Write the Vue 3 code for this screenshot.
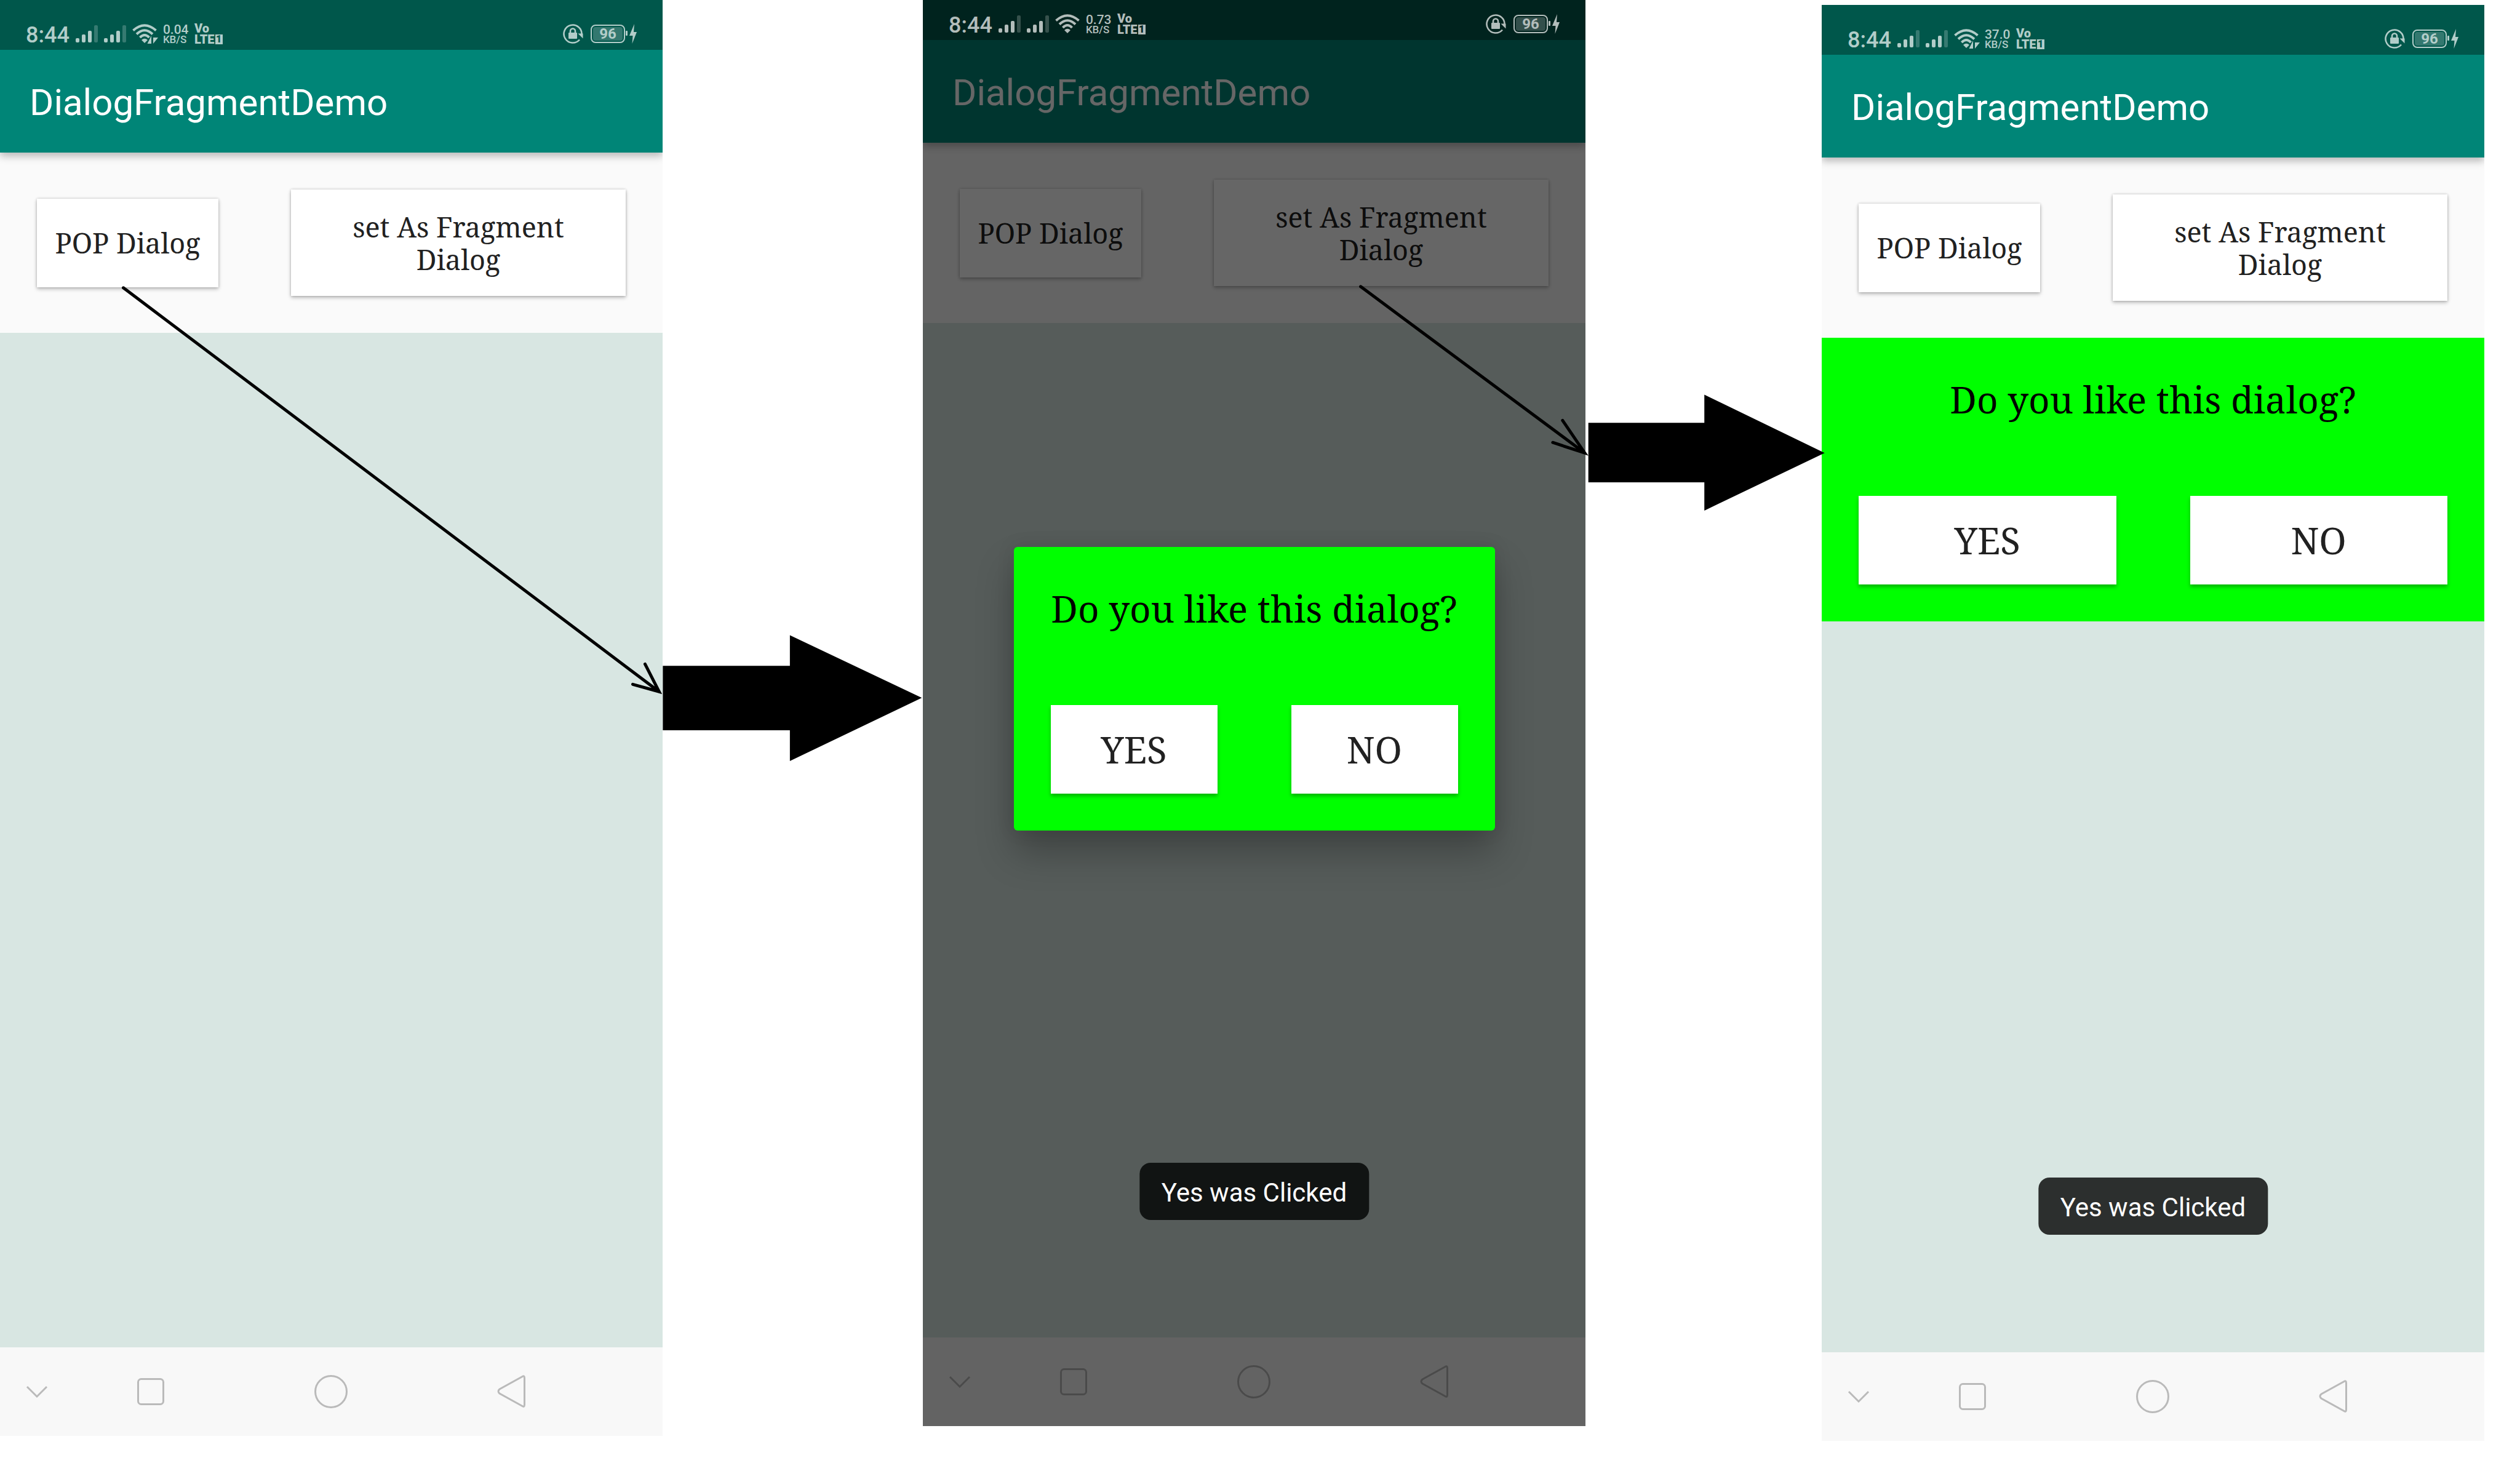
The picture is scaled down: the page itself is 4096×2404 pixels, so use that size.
<script setup>
const phones = [
  { id: 'start', speed: '0.04', transfer: true, dialog: null, toast: false },
  { id: 'popup', speed: '0.73', transfer: false, dialog: 'popup', toast: true },
  { id: 'inline', speed: '37.0', transfer: true, dialog: 'inline', toast: true },
]
</script>

<template>
  <main class="board">
    <section v-for="phone in phones" :key="phone.id" class="phone" :class="phone.id">
      <header class="status">
        <div class="status-row">
          <span class="clock">8:44</span>
          <svg v-for="n in 2" :key="n" class="signal" viewBox="0 0 37 28" aria-hidden="true">
            <rect x="0" y="21" width="6" height="7" rx="2" />
            <rect x="10" y="15" width="6" height="13" rx="2" />
            <rect x="20" y="9" width="6" height="19" rx="2" />
            <rect x="30" y="0" width="6" height="28" rx="2" opacity="0.3" />
          </svg>
          <svg class="wifi" viewBox="0 0 44 33" aria-hidden="true">
            <g fill="none" stroke="currentColor" stroke-width="4">
              <path d="M1.500 10.500Q20 -6 38.500 10.500" />
              <path d="M7 16.500Q20 4 33 16.500" />
              <path d="M12.500 22Q20 14 27.500 22" />
            </g>
            <path d="M15 26Q20 21.500 25 26L20 31Z" />
            <g v-if="phone.transfer">
              <path class="halo" d="M22 33L31 18H44V33Z" />
              <path d="M31 19V32H24.500ZM34 32V22H42Z" />
            </g>
          </svg>
          <span class="speed"><span class="rate">{{ phone.speed }}</span><span class="unit">KB/S</span></span>
          <span class="volte"><span>Vo</span><span class="lte">LTE<b class="sim"><span>1</span></b></span></span>
          <svg class="lock" viewBox="0 0 33 33" aria-hidden="true">
            <path d="M30.500 17A14.500 14.500 0 1 0 27 25.500" fill="none" stroke="currentColor" stroke-width="2.600" />
            <path d="M24.500 15.500H32.500V23.500Z" />
            <rect x="9" y="14" width="14" height="10" rx="1" />
            <path d="M12 15V11.500A4 4 0 0 1 20 11.500V15" fill="none" stroke="currentColor" stroke-width="2.600" />
          </svg>
          <span class="battery">96</span>
          <svg class="bolt" viewBox="0 0 19 32" aria-hidden="true">
            <rect x="0" y="11" width="3" height="8" rx="1" />
            <path d="M14 0L6 19H11.500L10.500 32L18 13H13Z" />
          </svg>
        </div>
      </header>

      <div class="appbar"><h1>DialogFragmentDemo</h1></div>

      <div class="actions">
        <button type="button" class="action pop">POP Dialog</button>
        <button type="button" class="action set">set As Fragment<br>Dialog</button>
      </div>

      <div class="content">
        <div v-if="phone.dialog === 'inline'" class="question">
          <p>Do you like this dialog?</p>
          <button type="button">YES</button>
          <button type="button">NO</button>
        </div>
      </div>

      <nav class="nav">
        <button type="button" class="hide" aria-label="Hide navigation">
          <svg viewBox="0 0 56 56"><path d="M12 20L28 36L44 20" /></svg>
        </button>
        <button type="button" aria-label="Recent apps">
          <svg viewBox="0 0 56 56"><rect x="7.500" y="7.500" width="41" height="41" rx="5" /></svg>
        </button>
        <button type="button" aria-label="Home">
          <svg viewBox="0 0 56 56"><circle cx="28" cy="28" r="25.500" /></svg>
        </button>
        <button type="button" aria-label="Back">
          <svg viewBox="0 0 56 56"><path d="M45 3.500Q48.500 1 48.500 6V49Q48.500 54 45 51.500L8 31Q4 27.500 8 24Z" /></svg>
        </button>
      </nav>

      <template v-if="phone.dialog === 'popup'">
        <div class="scrim"></div>
        <div class="question popup-card" role="dialog" aria-label="Do you like this dialog?">
          <p>Do you like this dialog?</p>
          <button type="button">YES</button>
          <button type="button">NO</button>
        </div>
      </template>
      <div v-if="phone.toast" class="toast" role="status">Yes was Clicked</div>
    </section>

    <svg class="arrows" viewBox="0 0 4106 2410" aria-hidden="true">
      <path d="M1080 1085H1287V1035L1502 1137L1287 1240V1190H1080Z" />
      <path d="M2588 689H2777V643L2973 738L2777 832V786H2588Z" />
      <g fill="none" stroke="#000" stroke-width="5" stroke-linecap="round">
        <path d="M201 469L1074 1127M1051 1082L1074 1127L1031 1115" />
        <path d="M2217 467L2582 738M2546 685L2582 738L2530 721" />
      </g>
    </svg>
  </main>
</template>

<style>
body {
  margin: 0;
  background: #fff;
}
</style>

<style scoped>
.board {
  position: relative;
  display: grid;
  grid-template-columns: 1077fr 423fr 1077fr 384fr 1077fr 58fr;
  align-items: start;
  min-height: 100vh;
  overflow: hidden;
  font-family: Roboto, "Liberation Sans", sans-serif;
}

.phone {
  --status-height: 81px;
  --status-color: #00574b;
  position: relative;
  display: flex;
  flex-direction: column;
  aspect-ratio: 1077 / 2334;
  background: #fafafa;
}

.start {
  grid-column: 1;
}

.popup {
  --status-height: 65px;
  grid-column: 3;
  aspect-ratio: 1077 / 2318;
}

.inline {
  grid-column: 5;
  margin-top: 8px;
}

/* Status bar */
.status {
  display: flex;
  align-items: flex-end;
  box-sizing: border-box;
  height: var(--status-height);
  background: var(--status-color);
}

.status-row {
  position: relative;
  z-index: 2;
  display: flex;
  flex: 1;
  align-items: center;
  height: 36px;
  padding: 0 41px 8px 42px;
  color: #b2cdc9;
}

.popup .status-row {
  --status-color: #00231e;
  color: #b3bdbb;
}

.status svg {
  fill: currentColor;
}

.clock {
  margin-right: 10px;
  padding-top: 4px;
  font-size: 36px;
  font-weight: 500;
  line-height: 36px;
}

.signal {
  width: 37px;
  height: 28px;
  margin-right: 9px;
}

.wifi {
  width: 44px;
  height: 33px;
  margin-right: 6px;
}

.halo {
  fill: var(--status-color);
}

.speed {
  display: flex;
  flex-direction: column;
  width: 42px;
  margin-right: 9px;
  font-weight: 500;
}

.rate {
  font-size: 21px;
  line-height: 18px;
}

.unit {
  font-size: 17px;
  line-height: 14px;
}

.volte {
  display: flex;
  flex-direction: column;
  font-size: 20px;
  font-weight: 900;
  line-height: 18px;
}

.lte {
  display: flex;
  align-items: center;
  gap: 1px;
}

.sim {
  width: 12px;
  height: 16px;
  background: currentColor;
  font-size: 16px;
  line-height: 16px;
  text-align: center;
}

.sim span {
  color: var(--status-color);
}

.lock {
  width: 33px;
  height: 33px;
  margin: 0 12px 0 auto;
}

.battery {
  box-sizing: border-box;
  width: 56px;
  height: 30px;
  margin-right: 1px;
  border: 2px solid currentColor;
  border-radius: 8px;
  background: rgba(255, 255, 255, 0.2) content-box;
  padding: 2px;
  font-size: 24px;
  font-weight: 700;
  line-height: 22px;
  text-align: center;
}

.bolt {
  width: 19px;
  height: 32px;
}

/* App bar */
.appbar {
  position: relative;
  display: flex;
  align-items: center;
  height: 167px;
  background: #008577;
  box-shadow: 0 6px 12px rgba(0, 0, 0, 0.26);
  clip-path: inset(0 0 -24px 0);
}

h1 {
  margin: 0;
  padding: 4px 0 0 48px;
  color: #fff;
  font-size: 60px;
  font-weight: 400;
  line-height: 72px;
}

/* Launch buttons */
.actions {
  display: flex;
  align-items: center;
  justify-content: space-between;
  box-sizing: border-box;
  height: 293px;
  padding: 0 60px;
}

button {
  border: 0;
  border-radius: 0;
  padding: 0;
  background: #fff;
  color: #212121;
  font-family: "Noto Serif", "Liberation Serif", serif;
}

.action {
  font-size: 45px;
  line-height: 53px;
  box-shadow: 0 3px 6px rgba(0, 0, 0, 0.24), 0 0 4px rgba(0, 0, 0, 0.2);
}

.pop {
  width: 295px;
  height: 144px;
}

.set {
  width: 544px;
  height: 173px;
}

.content {
  flex: 1;
  background: #d8e6e2;
}

/* Question panel, used inline and as a popup */
.question {
  display: grid;
  grid-template-columns: 1fr 1fr;
  gap: 117px 120px;
  box-sizing: border-box;
  padding: 60px;
  background: #0f0;
}

.question p {
  grid-column: 1 / -1;
  margin: 0;
  color: #000;
  font: 60px/80px "Noto Serif", "Liberation Serif", serif;
  text-align: center;
  white-space: nowrap;
}

.question button {
  height: 144px;
  font-size: 60px;
  box-shadow: 0 4px 6px rgba(0, 0, 0, 0.3);
}

.popup-card {
  position: absolute;
  top: 889px;
  left: 50%;
  width: 782px;
  transform: translateX(-50%);
  border-radius: 6px;
  box-shadow: 0 36px 60px rgba(0, 0, 0, 0.26), 0 0 30px rgba(0, 0, 0, 0.1);
}

.scrim {
  position: absolute;
  inset: 0;
  background: rgba(0, 0, 0, 0.6);
}

.toast {
  position: absolute;
  bottom: 335px;
  left: 50%;
  box-sizing: border-box;
  height: 93px;
  padding: 2px 36px 0;
  transform: translateX(-50%);
  border-radius: 18px;
  background: #2c2f2e;
  color: #fff;
  font-size: 42px;
  line-height: 93px;
  white-space: nowrap;
}

.popup .toast {
  background: #111413;
}

/* Navigation bar */
.nav {
  display: grid;
  grid-template-columns: 99fr 294fr 294fr 294fr 99fr;
  height: 144px;
  background: #f8f8f8;
}

.nav button {
  display: flex;
  align-items: center;
  justify-content: center;
  background: none;
}

.nav .hide {
  padding-left: 21px;
}

.nav svg {
  width: 56px;
  height: 56px;
  fill: none;
  stroke: #bababa;
  stroke-width: 3;
}

.arrows {
  position: absolute;
  top: 0;
  left: 0;
  width: 100%;
  pointer-events: none;
}
</style>
